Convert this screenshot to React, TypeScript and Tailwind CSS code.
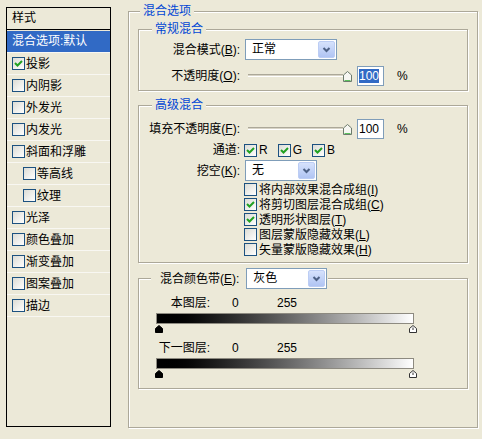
import React from "react";

function Box({ on }: { on?: boolean }) {
  return (
    <span className="flex h-[13px] w-[13px] shrink-0 items-center justify-center border border-[#1c5180] bg-linear-to-br from-[#dcdcd5] to-white">
      {on && (
        <svg width="9" height="9" viewBox="0 0 9 9">
          <path d="M1 4 L3.5 6.5 L8 2" fill="none" stroke="#21a121" strokeWidth="2" />
        </svg>
      )}
    </span>
  );
}

function Combo({ value, className }: { value: string; className: string }) {
  return (
    <div className={`flex h-[21px] shrink-0 border border-[#7f9db9] bg-white text-black ${className}`}>
      <span className="flex-1 pl-[6px] leading-[19px]">{value}</span>
      <span className="m-px flex w-[17px] items-center justify-center rounded-[2px] border border-[#bccdf4] bg-linear-to-b from-[#d6e2fc] to-[#b0c4f3]">
        <svg width="9" height="6" viewBox="0 0 9 6">
          <path d="M1.5 1 L4.5 4 L7.5 1" fill="none" stroke="#4d6185" strokeWidth="2" />
        </svg>
      </span>
    </div>
  );
}

function Slider() {
  return (
    <div className="flex h-[21px] w-[107px] shrink-0 items-center pl-[3px]">
      <div className="h-[3px] w-[95px] border-t border-b border-t-[#aca899] border-b-white bg-[#d8d4c6]" />
      <svg width="9" height="11" viewBox="0 0 9 11" className="mt-[2px]">
        <path d="M0.5 10.5 V4 L4.5 0.5 L8.5 4 V10.5 Z" fill="#f7f7f3" stroke="#6d7b6d" />
        <path d="M1.5 9.5 H7.5" stroke="#5cc25c" />
      </svg>
    </div>
  );
}

function Marks() {
  return (
    <div className="ml-[16px] mt-[1px] flex h-[8px] w-[262px] justify-between">
      <svg width="8" height="8" viewBox="0 0 8 8">
        <path d="M0.5 7.5 V3.5 L4 0.5 L7.5 3.5 V7.5 Z" fill="#000" stroke="#000" />
      </svg>
      <svg width="8" height="8" viewBox="0 0 8 8">
        <path d="M0.5 7.5 V3.5 L4 0.5 L7.5 3.5 V7.5 Z" fill="#fff" stroke="#333" />
        <path d="M4 2.5 V5" stroke="#333" />
      </svg>
    </div>
  );
}

const group =
  "w-[330px] border border-[#aca899] shadow-[inset_1px_1px_0_#fff,1px_1px_0_#fff]";
const legend = "ml-[13px] bg-[#ece9d8] px-[3px] text-[#0046d5]";

const effects: { label: string; on?: boolean; sub?: boolean }[] = [
  { label: "投影", on: true },
  { label: "内阴影" },
  { label: "外发光" },
  { label: "内发光" },
  { label: "斜面和浮雕" },
  { label: "等高线", sub: true },
  { label: "纹理", sub: true },
  { label: "光泽" },
  { label: "颜色叠加" },
  { label: "渐变叠加" },
  { label: "图案叠加" },
  { label: "描边" },
];

export default function App() {
  return (
    <div className="flex h-[439px] w-[482px] bg-[#ece9d8] font-['Liberation_Sans','Noto_Sans_CJK_SC',sans-serif] text-[12px] leading-[16px] text-black">
      {/* styles list */}
      <div className="ml-[6px] mt-[7px] h-[420px] w-[105px] shrink-0 border border-black">
        <div className="h-[22px] border-b border-black pl-[5px] leading-[21px]">样式</div>
        <div className="mt-px h-[22px] border-b border-[#f8f7f2] bg-[#316ac5] pl-[5px] leading-[21px] text-white">
          混合选项:默认
        </div>
        {effects.map((e) => (
          <div
            key={e.label}
            className={`flex h-[22px] items-center gap-px border-b border-[#f8f7f2] ${e.sub ? "pl-[16px]" : "pl-[5px]"}`}
          >
            <Box on={e.on} />
            <span>{e.label}</span>
          </div>
        ))}
      </div>

      {/* blending options */}
      <fieldset className="ml-[17px] mt-[3px] h-[425px] w-[350px] border border-[#aca899] shadow-[inset_1px_1px_0_#fff,1px_1px_0_#fff]">
        <legend className="ml-[11px] bg-[#ece9d8] px-[3px] text-[#0046d5]">混合选项</legend>
        <div className="px-[9px] pt-[2px]">
          <fieldset className={`${group} pb-[4px]`}>
            <legend className={legend}>常规混合</legend>
            <div className="mt-[2px] flex items-center">
              <div className="w-[101px] text-right">
                混合模式(<u className="underline">B</u>):
              </div>
              <Combo value="正常" className="ml-[5px] w-[92px]" />
            </div>
            <div className="mt-[5px] flex h-[21px] items-center">
              <div className="w-[101px] text-right">
                不透明度(<u className="underline">O</u>):
              </div>
              <div className="ml-[5px]">
                <Slider />
              </div>
              <div className="ml-[5px] flex h-[20px] w-[27px] items-center border border-[#7f9db9] bg-white pl-px">
                <span className="bg-[#316ac5] leading-[14px] text-white">100</span>
              </div>
              <span className="ml-[13px]">%</span>
            </div>
          </fieldset>

          <fieldset className={`${group} mt-[6px] pb-[5px]`}>
            <legend className={legend}>高级混合</legend>
            <div className="mt-[5px] flex h-[21px] items-center">
              <div className="w-[101px] text-right">
                填充不透明度(<u className="underline">F</u>):
              </div>
              <div className="ml-[5px]">
                <Slider />
              </div>
              <div className="ml-[5px] flex h-[20px] w-[27px] items-center border border-[#7f9db9] bg-white pl-px">
                <span className="leading-[14px]">100</span>
              </div>
              <span className="ml-[13px]">%</span>
            </div>
            <div className="mt-[3px] flex h-[16px] items-center">
              <div className="w-[101px] text-right">通道:</div>
              <span className="ml-[4px]">
                <Box on />
              </span>
              <span className="ml-[2px]">R</span>
              <span className="ml-[10px]">
                <Box on />
              </span>
              <span className="ml-[2px]">G</span>
              <span className="ml-[10px]">
                <Box on />
              </span>
              <span className="ml-[2px]">B</span>
            </div>
            <div className="mt-[2px] flex items-center">
              <div className="w-[101px] text-right">
                挖空(<u className="underline">K</u>):
              </div>
              <Combo value="无" className="ml-[5px] w-[72px]" />
            </div>
            <div className="mt-px pl-[105px]">
              {[
                { t: "将内部效果混合成组", k: "I" },
                { t: "将剪切图层混合成组", k: "C", on: true },
                { t: "透明形状图层", k: "T", on: true },
                { t: "图层蒙版隐藏效果", k: "L" },
                { t: "矢量蒙版隐藏效果", k: "H" },
              ].map((r) => (
                <div key={r.k} className="flex h-[15px] items-center gap-[2px]">
                  <Box on={r.on} />
                  <span>
                    {r.t}(<u className="underline">{r.k}</u>)
                  </span>
                </div>
              ))}
            </div>
          </fieldset>

          <fieldset className={`${group} mt-[5px] pb-[10px]`}>
            <legend className="ml-[12px] bg-[#ece9d8] pl-[9px] pr-px">
              <div className="flex items-center">
                <span>
                  混合颜色带(<u className="underline">E</u>):
                </span>
                <Combo value="灰色" className="ml-[7px] w-[81px]" />
              </div>
            </legend>
            <div className="mt-[6px] flex h-[16px]">
              <div className="w-[71px] text-right">本图层:</div>
              <span className="ml-[22px] w-[45px]">0</span>
              <span>255</span>
            </div>
            <div className="ml-[17px] mt-[2px] h-[11px] w-[258px] border border-[#8d8a80] bg-linear-to-r from-black to-white" />
            <Marks />
            <div className="mt-[7px] flex h-[16px]">
              <div className="w-[71px] text-right">下一图层:</div>
              <span className="ml-[22px] w-[45px]">0</span>
              <span>255</span>
            </div>
            <div className="ml-[17px] mt-[2px] h-[11px] w-[258px] border border-[#8d8a80] bg-linear-to-r from-black to-white" />
            <Marks />
          </fieldset>
        </div>
      </fieldset>
    </div>
  );
}
